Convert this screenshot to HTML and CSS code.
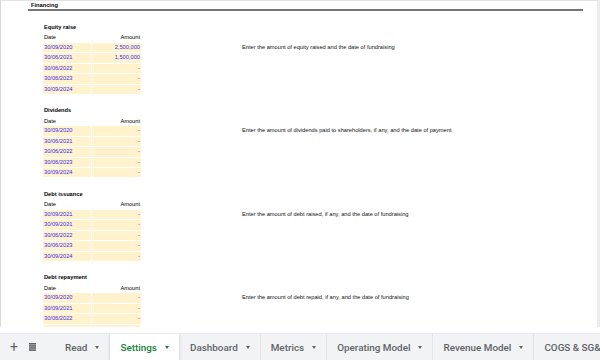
FILE: index.html
```html
<!DOCTYPE html>
<html lang="en">

<head>
    <meta charset="UTF-8">
    <title>Settings</title>
    <link rel="stylesheet" href="styles.css">
</head>

<body>
    <div class="sheet">
        <div class="gridtop"></div>
        <div class="heading"><span>Financing</span></div>
        <div class="blank"></div>

        <div class="block">
            <div class="title">Equity raise</div>
            <div class="cols"><span class="c-date">Date</span><span class="c-amt">Amount</span></div>
            <div class="row"><span class="cell date">30/09/2020</span><span class="cell amt">2,500,000</span><span class="note">Enter the amount of equity raised and the date of fundraising</span></div>
            <div class="row"><span class="cell date">30/06/2021</span><span class="cell amt">1,500,000</span></div>
            <div class="row"><span class="cell date">30/06/2022</span><span class="cell amt">-</span></div>
            <div class="row"><span class="cell date">30/06/2023</span><span class="cell amt">-</span></div>
            <div class="row"><span class="cell date">30/09/2024</span><span class="cell amt">-</span></div>
            <div class="blank"></div>
        </div>

        <div class="block">
            <div class="title">Dividends</div>
            <div class="cols"><span class="c-date">Date</span><span class="c-amt">Amount</span></div>
            <div class="row"><span class="cell date">30/09/2020</span><span class="cell amt">-</span><span class="note">Enter the amount of dividends paid to shareholders, if any, and the date of payment</span></div>
            <div class="row"><span class="cell date">30/06/2021</span><span class="cell amt">-</span></div>
            <div class="row"><span class="cell date">30/06/2022</span><span class="cell amt">-</span></div>
            <div class="row"><span class="cell date">30/06/2023</span><span class="cell amt">-</span></div>
            <div class="row"><span class="cell date">30/09/2024</span><span class="cell amt">-</span></div>
            <div class="blank"></div>
        </div>

        <div class="block">
            <div class="title">Debt issuance</div>
            <div class="cols"><span class="c-date">Date</span><span class="c-amt">Amount</span></div>
            <div class="row"><span class="cell date">30/09/2021</span><span class="cell amt">-</span><span class="note">Enter the amount of debt raised, if any, and the date of fundraising</span></div>
            <div class="row"><span class="cell date">30/09/2021</span><span class="cell amt">-</span></div>
            <div class="row"><span class="cell date">30/06/2022</span><span class="cell amt">-</span></div>
            <div class="row"><span class="cell date">30/06/2023</span><span class="cell amt">-</span></div>
            <div class="row"><span class="cell date">30/09/2024</span><span class="cell amt">-</span></div>
            <div class="blank"></div>
        </div>

        <div class="block">
            <div class="title">Debt repayment</div>
            <div class="cols"><span class="c-date">Date</span><span class="c-amt">Amount</span></div>
            <div class="row"><span class="cell date">30/09/2020</span><span class="cell amt">-</span><span class="note">Enter the amount of debt repaid, if any, and the date of fundraising</span></div>
            <div class="row"><span class="cell date">30/09/2021</span><span class="cell amt">-</span></div>
            <div class="row"><span class="cell date">30/06/2022</span><span class="cell amt">-</span></div>
            <div class="row"><span class="cell date">30/06/2023</span><span class="cell amt">-</span></div>
            <div class="row"><span class="cell date">30/09/2024</span><span class="cell amt">-</span></div>
        </div>
    </div>

    <div class="tabs">
        <div class="tool plus">+</div>
        <div class="tool list">
            <svg width="7" height="8" viewBox="0 0 7 8">
                <rect x="0" y="0" width="7" height="1.6" fill="#5f6368"/>
                <rect x="0" y="2.1" width="7" height="1.6" fill="#5f6368"/>
                <rect x="0" y="4.2" width="7" height="1.6" fill="#5f6368"/>
                <rect x="0" y="6.3" width="7" height="1.6" fill="#5f6368"/>
            </svg>
        </div>
        <div class="tab">Read<i class="caret"></i></div>
        <div class="tab active">Settings<i class="caret"></i></div>
        <div class="tab">Dashboard<i class="caret"></i></div>
        <div class="tab">Metrics<i class="caret"></i></div>
        <div class="tab">Operating Model<i class="caret"></i></div>
        <div class="tab">Revenue Model<i class="caret"></i></div>
        <div class="tab">COGS &amp; SG&amp;A<i class="caret"></i></div>
    </div>
</body>

</html>
```

FILE: styles.css
```css
:root {
    --input-blue: #3a2cf5;
    --cell-yellow: #fff2cc;
    --tab-bg: #f1f3f4;
    --tab-text: #5f6368;
    --tab-active: #188038;
}

* {
    box-sizing: border-box;
    margin: 0;
    padding: 0;
}

body {
    width: 600px;
    height: 360px;
    overflow: hidden;
    background: #ffffff;
    font-family: "Liberation Sans", Arial, sans-serif;
    color: #000;
}

.sheet {
    height: 327px;
    margin-bottom: 6px;
    overflow: hidden;
    border-left: 1px solid #d9d9d9;
    border-right: 3px solid #ececec;
    font-size: 5.7px;
}

.gridtop {
    height: 1px;
    background: #e3e3e3;
}

.heading {
    height: 10.45px;
    margin: 0 14px 0 27px;
    padding-left: 3px;
    border-bottom: 2px solid #757575;
    font-weight: bold;
    line-height: 9px;
}

.blank {
    height: 10.45px;
}

.block {
    padding-left: 42px;
}

.title {
    height: 10.45px;
    line-height: 10.45px;
    font-weight: bold;
    padding-left: 1px;
}

.cols {
    display: flex;
    width: 98px;
    height: 10.45px;
    line-height: 10.45px;
    justify-content: space-between;
    padding: 0 1px;
}

.row {
    display: flex;
    height: 10.45px;
}

.cell {
    flex-shrink: 0;
    height: 9.45px;
    line-height: 9.6px;
    background: var(--cell-yellow);
    color: var(--input-blue);
}

.date {
    width: 48px;
    padding-left: 1px;
}

.amt {
    width: 49px;
    margin-left: 1px;
    text-align: right;
    padding-right: 1px;
}

.note {
    margin-left: 101px;
    line-height: 9.6px;
    white-space: nowrap;
    color: #111;
}

.tabs {
    height: 27px;
    display: flex;
    align-items: stretch;
    background: var(--tab-bg);
    border-top: 1px solid #e8eaed;
    font-family: Roboto, "Liberation Sans", sans-serif;
    font-size: 9.9px;
    font-weight: 500;
    color: var(--tab-text);
    white-space: nowrap;
    overflow: hidden;
}

.tool {
    flex-shrink: 0;
    display: flex;
    align-items: center;
    justify-content: center;
}

.plus {
    width: 22px;
    padding-left: 6px;
    font-size: 14px;
    font-weight: 400;
}

.list {
    width: 20px;
    margin-right: 13px;
}

.tab {
    flex-shrink: 0;
    display: flex;
    align-items: center;
    padding: 0 10px;
    border-right: 1px solid #e3e5e8;
}

.tab.active {
    background: #ffffff;
    color: var(--tab-active);
    box-shadow: 0 1px 3px rgba(60, 64, 67, 0.15);
}

.caret {
    margin-left: 8px;
    border-left: 2.5px solid transparent;
    border-right: 2.5px solid transparent;
    border-top: 3px solid currentColor;
}
```
